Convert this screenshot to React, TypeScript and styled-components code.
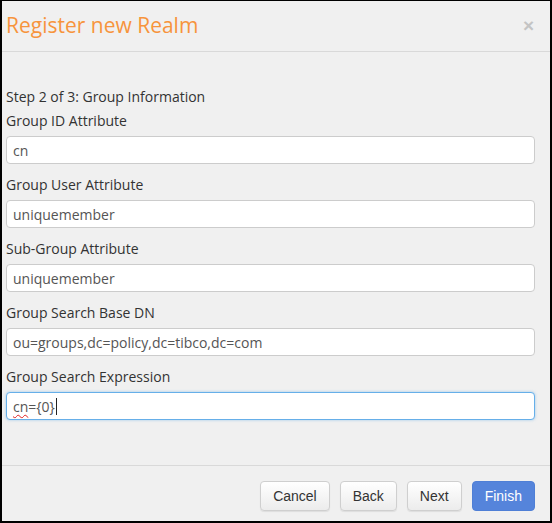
import React from "react";
import styled, { createGlobalStyle } from "styled-components";

const Global = createGlobalStyle`
  html, body { margin: 0; padding: 0; background: #000; }
  * { box-sizing: border-box; }
`;

const Dialog = styled.div`
  width: 552px;
  height: 523px;
  background: #f0f0f0;
  border-style: solid;
  border-color: #000;
  border-width: 1px 2px 2px 2px;
  display: flex;
  flex-direction: column;
  font-family: "Open Sans", sans-serif;
`;

const Header = styled.div`
  height: 51px;
  border-bottom: 1px solid #d9d9d9;
  display: flex;
  align-items: center;
  justify-content: space-between;
  padding: 0 16px 0 4px;
`;

const Title = styled.h1`
  margin: 0;
  font-size: 21px;
  font-weight: 400;
  color: #f7943c;
  line-height: 1;
  padding-bottom: 2px;
`;

const Close = styled.span`
  font-family: "Liberation Sans", Arial, sans-serif;
  font-size: 19px;
  font-weight: 700;
  color: #c4c4c4;
  line-height: 1;
  padding-bottom: 1px;
`;

const Body = styled.div`
  flex: 1;
  padding: 35px 15px 0 4px;
`;

const Step = styled.div`
  font-size: 14px;
  line-height: 20px;
  color: #333;
  margin-bottom: 4px;
`;

const Group = styled.div`
  margin-bottom: 11px;
`;

const Label = styled.label`
  display: block;
  font-size: 14px;
  line-height: 20px;
  color: #333;
  margin-bottom: 5px;
`;

const Input = styled.input`
  display: block;
  width: 100%;
  height: 28px;
  padding: 0 6px;
  font-family: "Open Sans", sans-serif;
  font-size: 14px;
  color: #555;
  background: #fff;
  border: 1px solid #cccccc;
  border-radius: 4px;
  outline: none;
`;

const FocusedBox = styled.div`
  display: flex;
  align-items: center;
  width: 100%;
  height: 28px;
  padding: 0 6px;
  font-size: 14px;
  color: #555;
  background: #fff;
  border: 1px solid #66afe9;
  border-radius: 4px;
  box-shadow: 0 0 3px rgba(102, 175, 233, 0.6);
`;

const Misspelled = styled.span`
  text-decoration: underline wavy #e02020;
  text-decoration-thickness: 1px;
  text-underline-offset: 2px;
`;

const Caret = styled.span`
  display: inline-block;
  width: 1px;
  height: 17px;
  background: #222;
  margin-left: 1px;
`;

const Footer = styled.div`
  border-top: 1px solid #d9d9d9;
  padding: 15px 15px 10px;
  display: flex;
  justify-content: flex-end;
  gap: 10px;
`;

const Button = styled.button<{ $primary?: boolean }>`
  height: 30px;
  padding: 0 12px;
  font-family: "Liberation Sans", Arial, sans-serif;
  font-size: 14px;
  border-radius: 4px;
  cursor: pointer;
  color: ${(p) => (p.$primary ? "#fff" : "#333")};
  border: 1px solid ${(p) => (p.$primary ? "#4f7fd6" : "#cfcfcf")};
  background: ${(p) =>
    p.$primary ? "#5584db" : "linear-gradient(#ffffff, #ececec)"};
  box-shadow: ${(p) => (p.$primary ? "none" : "0 1px 1px rgba(0,0,0,0.08)")};
`;

const fields = [
  { label: "Group ID Attribute", value: "cn" },
  { label: "Group User Attribute", value: "uniquemember" },
  { label: "Sub-Group Attribute", value: "uniquemember" },
  { label: "Group Search Base DN", value: "ou=groups,dc=policy,dc=tibco,dc=com" },
];

export default function App() {
  return (
    <>
      <Global />
      <Dialog>
        <Header>
          <Title>Register new Realm</Title>
          <Close>×</Close>
        </Header>
        <Body>
          <Step>Step 2 of 3: Group Information</Step>
          {fields.map((f) => (
            <Group key={f.label}>
              <Label>{f.label}</Label>
              <Input value={f.value} readOnly />
            </Group>
          ))}
          <Group>
            <Label>Group Search Expression</Label>
            <FocusedBox>
              <Misspelled>cn</Misspelled>={"{0}"}
              <Caret />
            </FocusedBox>
          </Group>
        </Body>
        <Footer>
          <Button>Cancel</Button>
          <Button>Back</Button>
          <Button>Next</Button>
          <Button $primary>Finish</Button>
        </Footer>
      </Dialog>
    </>
  );
}
